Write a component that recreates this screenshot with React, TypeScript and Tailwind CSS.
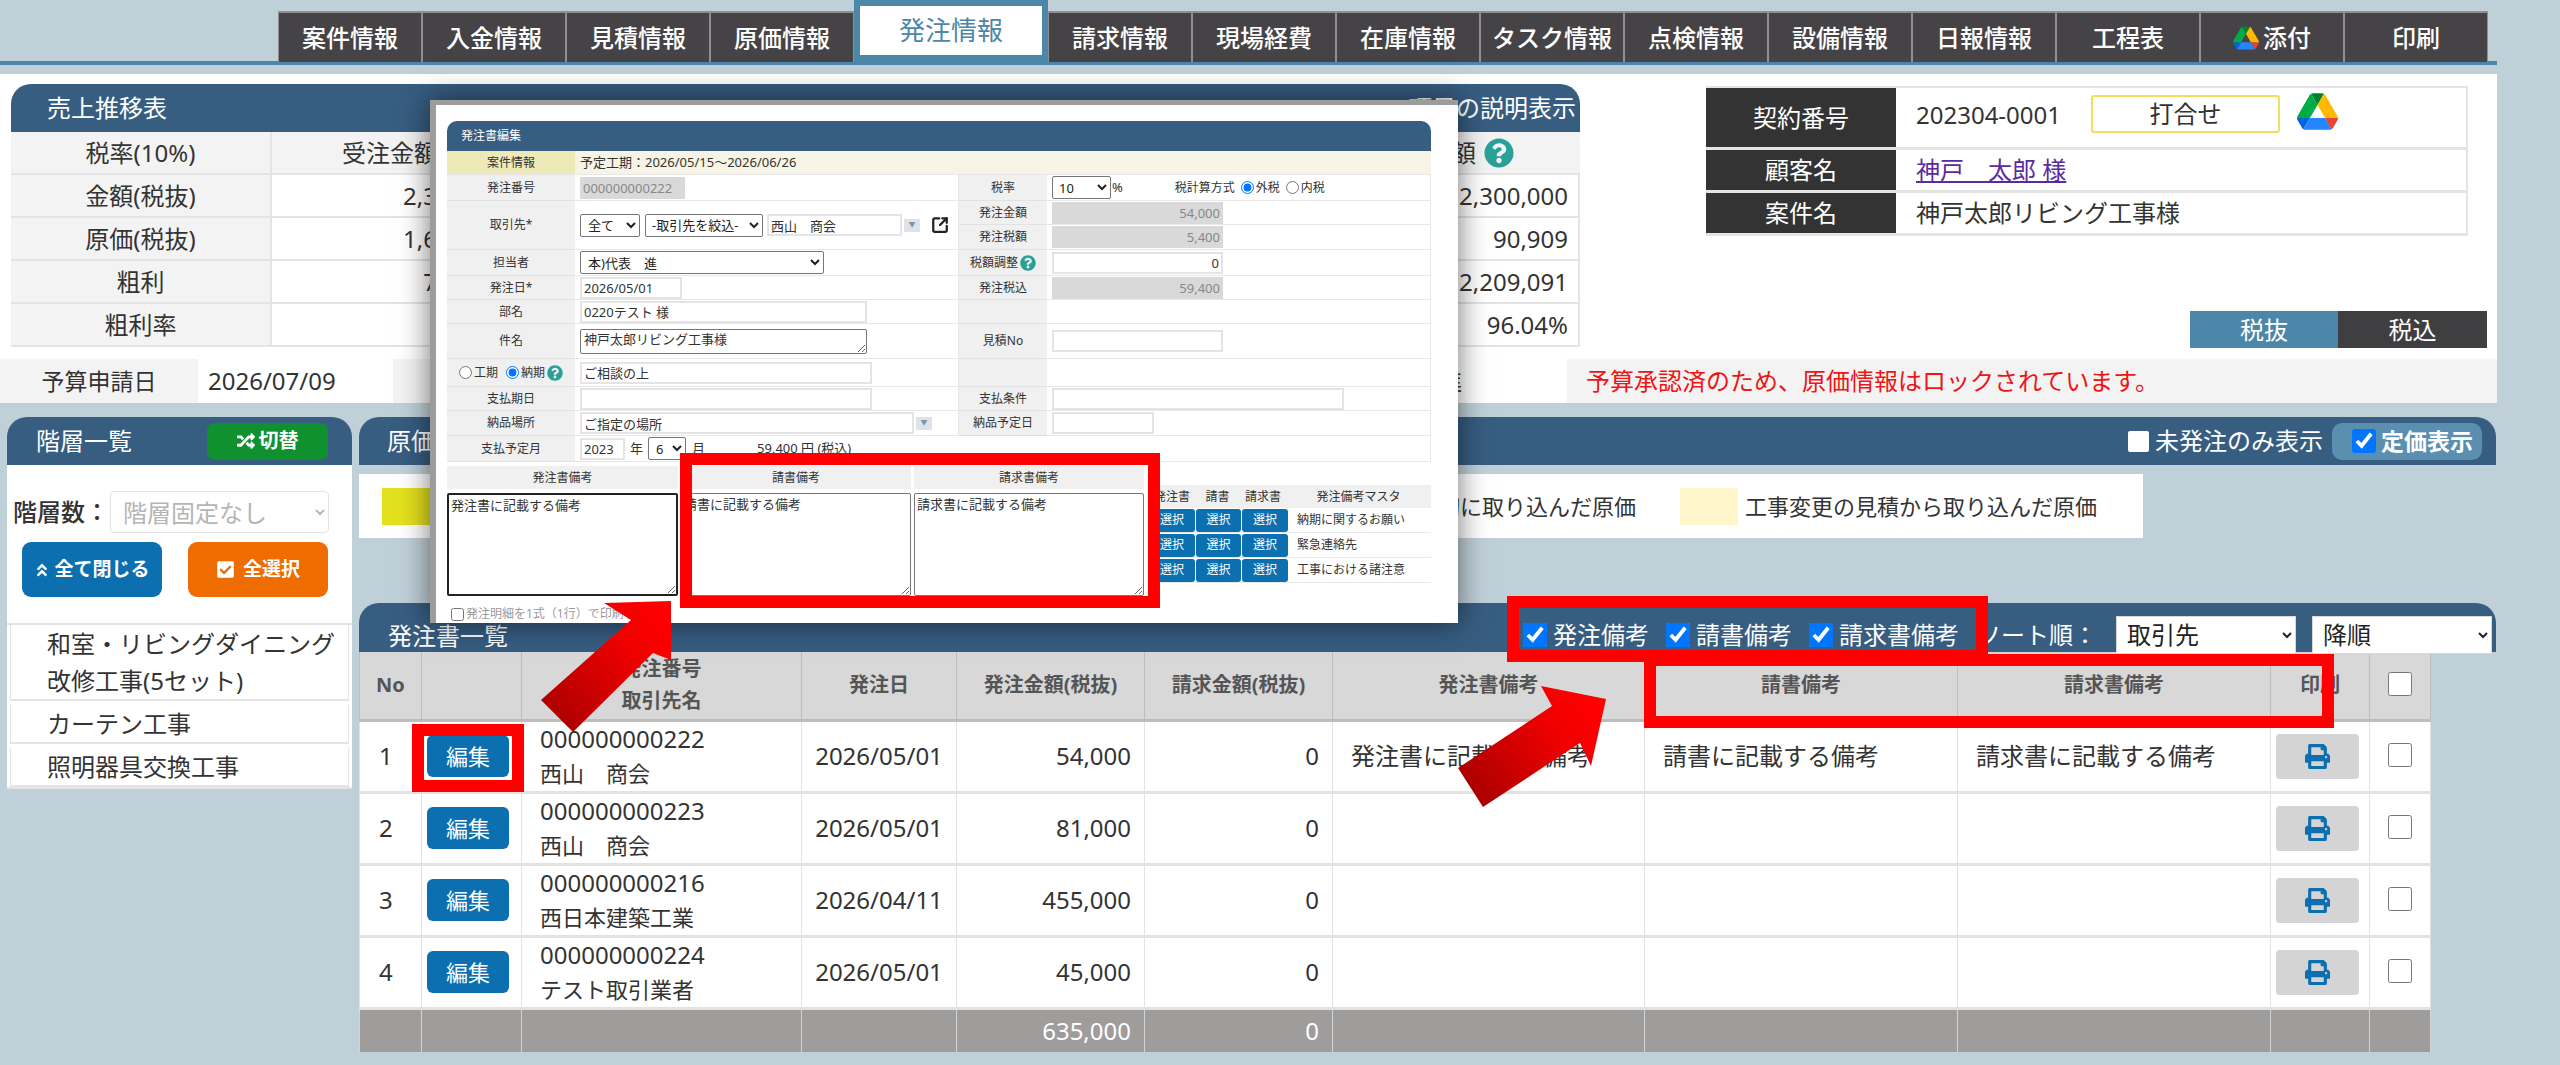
import { SquareArrowOutUpRight } from 'lucide-react'
import { FaAngleDoubleUp, FaCheckSquare, FaPrint, FaQuestionCircle, FaRandom } from 'react-icons/fa'

const tabs = ['案件情報', '入金情報', '見積情報', '原価情報', '発注情報', '請求情報', '現場経費', '在庫情報', 'タスク情報', '点検情報', '設備情報', '日報情報', '工程表', '添付', '印刷']

const salesRows = [
  { label: '金額(税抜)', first: '2,300,000', last: '2,300,000' },
  { label: '原価(税抜)', first: '1,650,000', last: '90,909' },
  { label: '粗利', first: '700,000', last: '2,209,091' },
  { label: '粗利率', first: '', last: '96.04%' },
]

const orders = [
  { no: 1, code: '000000000222', name: '西山　商会', date: '2026/05/01', amount: '54,000', note1: '発注書に記載する備考', note2: '請書に記載する備考', note3: '請求書に記載する備考' },
  { no: 2, code: '000000000223', name: '西山　商会', date: '2026/05/01', amount: '81,000', note1: '', note2: '', note3: '' },
  { no: 3, code: '000000000216', name: '西日本建築工業', date: '2026/04/11', amount: '455,000', note1: '', note2: '', note3: '' },
  { no: 4, code: '000000000224', name: 'テスト取引業者', date: '2026/05/01', amount: '45,000', note1: '', note2: '', note3: '' },
]

function DriveLogo({ className }: { className: string }) {
  return (
    <svg viewBox="0 0 87.3 78" className={className}>
      <path d="m6.6 66.85 3.85 6.65c.8 1.4 1.95 2.5 3.3 3.3l13.75-23.8h-27.5c0 1.55.4 3.1 1.2 4.5z" fill="#0066da" />
      <path d="m43.65 25-13.75-23.8c-1.35.8-2.5 1.9-3.3 3.3l-25.4 44a9.06 9.06 0 0 0 -1.2 4.5h27.5z" fill="#00ac47" />
      <path d="m73.55 76.8c1.35-.8 2.5-1.9 3.3-3.3l1.6-2.75 7.65-13.25c.8-1.4 1.2-2.95 1.2-4.5h-27.502l5.852 11.5z" fill="#ea4335" />
      <path d="m43.65 25 13.75-23.8c-1.35-.8-2.9-1.2-4.5-1.2h-18.5c-1.6 0-3.15.45-4.5 1.2z" fill="#00832d" />
      <path d="m59.8 53h-32.3l-13.75 23.8c1.35.8 2.9 1.2 4.5 1.2h50.8c1.6 0 3.15-.45 4.5-1.2z" fill="#2684fc" />
      <path d="m73.4 26.5-12.7-22c-.8-1.4-1.95-2.5-3.3-3.3l-13.75 23.8 16.15 28h27.45c0-1.55-.4-3.1-1.2-4.5z" fill="#ffba00" />
    </svg>
  )
}

function TabBar() {
  return (
    <div className="flex h-[65px] w-[2497px] border-b-[4px] border-[#4c86a8] pl-[278px] pt-[11px]">
      {tabs.map((tab) =>
        tab === '発注情報' ? (
          <div key={tab} className="-mt-[11px] flex h-[61px] w-[194px] shrink-0 items-center justify-center border-[6px] border-[#4c86a8] bg-white text-[26px] text-[#4c86a8]">
            {tab}
          </div>
        ) : (
          <div key={tab} className="flex h-[51px] w-[144px] shrink-0 items-center justify-center gap-1 border-x border-t-2 border-[#8f8f8f] bg-[#454345] text-[24px] font-medium text-white">
            {tab === '添付' ? <DriveLogo className="h-[24px] w-[26px]" /> : null}
            {tab}
          </div>
        ),
      )}
    </div>
  )
}

function SalesTable() {
  return (
    <div className="w-[1569px]">
      <div className="flex h-[48px] items-center justify-between rounded-t-[20px] bg-[#375d81] pl-[36px] pr-[4px] text-[24px] text-white">
        <span>売上推移表</span>
        <span>項目の説明表示</span>
      </div>
      <div className="grid h-[43px] grid-cols-[261px_248px_1fr_180px] border-b-2 border-[#e4e4e4] bg-[#f3f3f3] text-[24px] text-[#333]">
        <div className="flex items-center justify-center border-r-2 border-[#e4e4e4]">税率(10%)</div>
        <div className="flex items-center justify-center pr-[12px]">受注金額</div>
        <div />
        <div className="flex items-center gap-2 pl-[4px]">
          粗利額
          <FaQuestionCircle className="text-[30px] text-[#2aa198]" />
        </div>
      </div>
      {salesRows.map((row) => (
        <div key={row.label} className="grid h-[43px] grid-cols-[261px_248px_1fr_180px] border-b-2 border-[#e4e4e4] text-[24px] text-[#333]">
          <div className="flex items-center justify-center border-r-2 border-[#e4e4e4] bg-[#f3f3f3]">{row.label}</div>
          <div className="flex items-center justify-end pr-2">{row.first}</div>
          <div />
          <div className="flex items-center justify-end border-r-2 border-[#e4e4e4] pr-[10px]">{row.last}</div>
        </div>
      ))}
    </div>
  )
}

function ContractInfo() {
  const rowClass = 'flex border-b-[3px] border-[#e4e4e4] text-[24px] text-[#333]'
  const labelClass = 'flex w-[190px] shrink-0 items-center justify-center bg-[#333] text-white'
  return (
    <div className="ml-[126px] flex h-[264px] w-[781px] flex-col justify-between pt-[2px]">
      <div className="w-[762px] border-r-2 border-t-2 border-[#e4e4e4]">
        <div className={`${rowClass} h-[62px]`}>
          <div className={labelClass}>契約番号</div>
          <div className="flex items-start pl-[20px] pt-[7px]">
            <span className="w-[175px] pt-[2px] text-[24px]">202304-0001</span>
            <button className="flex h-[38px] w-[189px] items-center justify-center rounded-[3px] border-2 border-[#f5dc5c] bg-white text-[24px]">打合せ</button>
            <DriveLogo className="-mt-[2px] ml-[17px] h-[37px] w-[41px]" />
          </div>
        </div>
        <div className={`${rowClass} h-[43px]`}>
          <div className={labelClass}>顧客名</div>
          <a className="ml-[20px] self-center text-[#5b2a9d] underline">神戸　太郎 様</a>
        </div>
        <div className={`${rowClass} h-[43px]`}>
          <div className={labelClass}>案件名</div>
          <span className="ml-[20px] self-center">神戸太郎リビング工事様</span>
        </div>
      </div>
      <div className="ml-[484px] flex h-[37px] text-[24px] text-white">
        <div className="flex w-[148px] items-center justify-center bg-[#4c86a8]">税抜</div>
        <div className="flex w-[149px] items-center justify-center bg-[#3f3e40]">税込</div>
      </div>
    </div>
  )
}

function TopPanel() {
  return (
    <div className="mt-[9px] h-[328px] w-[2497px] bg-white pt-[10px]">
      <div className="flex pl-[11px]">
        <SalesTable />
        <ContractInfo />
      </div>
      <div className="mt-[11px] flex h-[44px] items-stretch bg-[#f3f3f3] text-[24px] text-[#333]">
        <div className="flex w-[198px] items-center justify-center text-[23px]">予算申請日</div>
        <div className="flex w-[195px] items-center bg-white pl-[10px]">2026/07/09</div>
        <div className="flex w-[906px] items-center justify-center">予算申請者</div>
        <div className="flex w-[268px] items-center bg-white pl-[36px]">本)代表　進</div>
        <div className="flex items-center pl-[19px] text-[#f01414]">予算承認済のため、原価情報はロックされています。</div>
      </div>
    </div>
  )
}

function Sidebar() {
  const items = ['和室・リビングダイニング改修工事(5セット)', 'カーテン工事', '照明器具交換工事']
  return (
    <aside className="ml-[7px] h-[372px] w-[345px] shrink-0">
      <div className="flex h-[48px] items-center justify-between rounded-t-[20px] bg-[#375d81] pl-[29px] pr-[24px] text-[24px] text-white">
        <span>階層一覧</span>
        <button className="flex h-[37px] w-[121px] items-center justify-center gap-1 rounded-[8px] bg-[#0f9130] text-[20px] font-bold text-white">
          <FaRandom className="text-[18px]" />
          切替
        </button>
      </div>
      <div className="h-[324px] bg-white pt-[26px]">
        <div className="flex items-center pl-[6px] text-[24px] text-[#333]">
          <span className="w-[97px] font-medium">階層数：</span>
          <select disabled defaultValue="none" className="h-[42px] w-[219px] rounded-[4px] border border-[#e2e2e2] bg-white pl-[8px] text-[#b5b5b5] opacity-100">
            <option value="none">階層固定なし</option>
          </select>
        </div>
        <div className="mt-[9px] flex gap-[26px] pl-[15px]">
          <button className="flex h-[55px] w-[140px] items-center justify-center gap-1 rounded-[9px] bg-[#0b6fb0] text-[19px] font-bold text-white">
            <FaAngleDoubleUp className="text-[16px]" />
            全て閉じる
          </button>
          <button className="flex h-[55px] w-[140px] items-center justify-center gap-2 rounded-[9px] bg-[#ef6c00] text-[19px] font-bold text-white">
            <FaCheckSquare className="text-[19px]" />
            全選択
          </button>
        </div>
        <div className="mt-[26px] border-y-2 border-[#e4e4e4] px-[3px]">
          {items.map((item) => (
            <div key={item} className="mb-[4px] border-x border-b-2 border-[#e4e4e4] pl-[36px] pr-[4px] text-[24px] leading-[37px] text-[#333] last:mb-0">
              {item}
            </div>
          ))}
        </div>
      </div>
    </aside>
  )
}

function OrderTable() {
  const head = 'border-x border-b-[3px] border-[#bdbdbd] bg-[#d8d8d8] text-[20px] font-bold text-[#555]'
  const cell = 'border-x border-b-[3px] border-[#e2e2e2] px-[18px] text-[24px] text-[#333]'
  const foot = 'border-x border-[#d4d4d4] bg-[#9f9c9c] px-[13px] text-right text-[24px] text-white'
  return (
    <table className="w-[2071px] table-fixed border-collapse bg-white">
      <colgroup>
        {[62, 100, 280, 155, 188, 188, 312, 313, 313, 99, 61].map((w, i) => (
          <col key={i} style={{ width: w }} />
        ))}
      </colgroup>
      <thead>
        <tr className="h-[68px]">
          <th className={head}>No</th>
          <th className={head} />
          <th className={`${head} leading-[32px]`}>発注番号<br />取引先名</th>
          <th className={head}>発注日</th>
          <th className={head}>発注金額(税抜)</th>
          <th className={head}>請求金額(税抜)</th>
          <th className={head}>発注書備考</th>
          <th className={head}>請書備考</th>
          <th className={head}>請求書備考</th>
          <th className={head}>印刷</th>
          <th className={head}><input type="checkbox" className="mt-[6px] h-[24px] w-[24px]" /></th>
        </tr>
      </thead>
      <tbody>
        {orders.map((order) => (
          <tr key={order.no} className="h-[72px]">
            <td className={`${cell} !px-[19px]`}>{order.no}</td>
            <td className={`${cell} !pl-0 !pr-[7px] text-center`}>
              <button className="h-[42px] w-[82px] rounded-[6px] bg-[#0b6fb0] text-[22px] text-white">編集</button>
            </td>
            <td className={cell}>
              <div className="leading-[34px]">{order.code}</div>
              <div className="text-[22px] leading-[34px]">{order.name}</div>
            </td>
            <td className={`${cell} !px-[9px] text-center`}>{order.date}</td>
            <td className={`${cell} !px-[13px] text-right`}>{order.amount}</td>
            <td className={`${cell} !px-[13px] text-right`}>0</td>
            <td className={`${cell} text-[22px]`}>{order.note1}</td>
            <td className={`${cell} text-[22px]`}>{order.note2}</td>
            <td className={`${cell} text-[22px]`}>{order.note3}</td>
            <td className={`${cell} !pl-0 !pr-[6px] text-center`}>
              <button className="inline-flex h-[45px] w-[83px] items-center justify-center rounded-[4px] bg-[#d4d4d4] text-[25px] text-[#0b6fb0]">
                <FaPrint />
              </button>
            </td>
            <td className={`${cell} !px-0 text-center`}>
              <input type="checkbox" className="mt-[6px] h-[24px] w-[24px]" />
            </td>
          </tr>
        ))}
        <tr className="h-[44px]">
          <td className={foot} />
          <td className={foot} />
          <td className={foot} />
          <td className={foot} />
          <td className={foot}>635,000</td>
          <td className={foot}>0</td>
          <td className={foot} />
          <td className={foot} />
          <td className={foot} />
          <td className={foot} />
          <td className={foot} />
        </tr>
      </tbody>
    </table>
  )
}

function MainColumn() {
  const checks = ['発注備考', '請書備考', '請求書備考']
  return (
    <main className="ml-[7px] w-[2137px] shrink-0">
      <div className="flex h-[48px] items-center rounded-t-[20px] bg-[#375d81] pl-[28px] pr-[14px] text-[24px] text-white">
        <span>原価一覧</span>
        <label className="ml-auto flex items-center gap-[6px]">
          <input type="checkbox" className="h-[21px] w-[21px] appearance-none rounded-[2px] bg-white" />
          未発注のみ表示
        </label>
        <label className="ml-[9px] flex h-[37px] w-[150px] items-center gap-[5px] rounded-[10px] bg-[#5a8fb0] pl-[20px] text-[23px] font-bold">
          <input type="checkbox" defaultChecked className="h-[24px] w-[24px] shrink-0" />
          定価表示
        </label>
      </div>
      <div className="mt-[9px] flex h-[64px] w-[1784px] items-center bg-white pl-[23px] text-[22px] text-[#333]">
        <div className="h-[37px] w-[58px] bg-[#e3e01e]" />
        <span className="ml-[12px] w-[1184px] text-right">見積から一括で最初に取り込んだ原価</span>
        <div className="ml-[44px] h-[37px] w-[58px] bg-[#fff6cc]" />
        <span className="ml-[7px]">工事変更の見積から取り込んだ原価</span>
      </div>
      <div className="mt-[65px] flex h-[49px] items-center rounded-t-[20px] bg-[#375d81] pl-[29px] text-[24px] text-white">
        <span className="pt-[16px]">発注書一覧</span>
        <div className="ml-[1015px] flex items-center pt-[14px]">
          {checks.map((check) => (
            <label key={check} className="mr-[17px] flex items-center gap-[6px] last:mr-0">
              <input type="checkbox" defaultChecked className="h-[24px] w-[24px]" />
              {check}
            </label>
          ))}
        </div>
        <span className="ml-[18px] pt-[14px]">ソート順：</span>
        <select defaultValue="a" className="ml-[19px] mt-[14px] h-[38px] w-[180px] border border-[#d8d8d8] bg-white pl-[6px] text-[24px] text-[#222]">
          <option value="a">取引先</option>
        </select>
        <select defaultValue="b" className="ml-[16px] mt-[14px] h-[38px] w-[180px] border border-[#d8d8d8] bg-white pl-[6px] text-[24px] text-[#222]">
          <option value="b">降順</option>
        </select>
      </div>
      <OrderTable />
    </main>
  )
}

const fieldClass = 'h-[22px] border-2 border-[#e4e4e4] bg-white px-[2px] text-[13px] text-[#333]'
const selectClass = 'h-[23px] rounded-[2px] border border-[#767676] bg-white text-[13px] text-[#222]'

function FormLabel({ children, className = '' }: { children?: React.ReactNode; className?: string }) {
  return <div className={`flex items-center justify-center border-b border-[#e2e2e2] bg-[#f0f0f0] text-[12px] text-[#333] ${className}`}>{children}</div>
}

function FormValue({ children, className = '' }: { children?: React.ReactNode; className?: string }) {
  return <div className={`flex items-center border-b border-r border-[#e8e8e8] pl-[5px] text-[13px] text-[#333] ${className}`}>{children}</div>
}

function DropButton() {
  return (
    <span className="ml-[2px] flex h-[13px] w-[16px] items-center justify-center bg-[#dde3e8] text-[7px] text-[#7d93a8]">▼</span>
  )
}

function Help({ className = '' }: { className?: string }) {
  return <FaQuestionCircle className={`text-[#2aa198] ${className}`} />
}

function OrderForm() {
  return (
    <div className="grid grid-cols-[128px_384px_88px_1fr] grid-rows-[26px_24px_25px_26px_24px_24px_35px_28px_24px_25px_26px]">
      <FormLabel>発注番号</FormLabel>
      <FormValue>
        <input readOnly defaultValue="000000000222" className="h-[22px] w-[105px] bg-[#d9d9d9] px-[3px] text-[13px] text-[#888]" />
      </FormValue>
      <FormLabel>税率</FormLabel>
      <FormValue>
        <select defaultValue="10" className={`${selectClass} w-[59px] pl-[2px]`}>
          <option value="10">10</option>
        </select>
        <span className="ml-[1px]">%</span>
        <span className="ml-[52px] text-[12px]">税計算方式</span>
        <input type="radio" name="tax" defaultChecked className="ml-[6px] h-[13px] w-[13px]" />
        <span className="ml-[2px] text-[12px]">外税</span>
        <input type="radio" name="tax" className="ml-[6px] h-[13px] w-[13px]" />
        <span className="ml-[2px] text-[12px]">内税</span>
      </FormValue>

      <FormLabel className="row-span-2">取引先*</FormLabel>
      <FormValue className="row-span-2">
        <select defaultValue="all" className={`${selectClass} w-[60px] pl-[3px]`}>
          <option value="all">全て</option>
        </select>
        <select defaultValue="f" className={`${selectClass} ml-[5px] w-[118px] pl-[2px]`}>
          <option value="f">-取引先を絞込-</option>
        </select>
        <input readOnly defaultValue="西山　商会" className={`${fieldClass} ml-[4px] w-[135px]`} />
        <DropButton />
        <SquareArrowOutUpRight size={18} strokeWidth={3} className="ml-[11px] text-[#222]" />
      </FormValue>
      <FormLabel>発注金額</FormLabel>
      <FormValue>
        <input readOnly defaultValue="54,000" className="h-[22px] w-[171px] bg-[#d9d9d9] px-[3px] text-right text-[13px] text-[#888]" />
      </FormValue>
      <FormLabel>発注税額</FormLabel>
      <FormValue>
        <input readOnly defaultValue="5,400" className="h-[22px] w-[171px] bg-[#d9d9d9] px-[3px] text-right text-[13px] text-[#888]" />
      </FormValue>

      <FormLabel>担当者</FormLabel>
      <FormValue>
        <select defaultValue="s" className={`${selectClass} w-[244px] pl-[3px]`}>
          <option value="s">本)代表　進</option>
        </select>
      </FormValue>
      <FormLabel className="gap-[2px]">税額調整<Help className="text-[16px]" /></FormLabel>
      <FormValue>
        <input readOnly defaultValue="0" className={`${fieldClass} w-[171px] text-right`} />
      </FormValue>

      <FormLabel>発注日*</FormLabel>
      <FormValue>
        <input readOnly defaultValue="2026/05/01" className={`${fieldClass} w-[102px]`} />
      </FormValue>
      <FormLabel>発注税込</FormLabel>
      <FormValue>
        <input readOnly defaultValue="59,400" className="h-[22px] w-[171px] bg-[#d9d9d9] px-[3px] text-right text-[13px] text-[#888]" />
      </FormValue>

      <FormLabel>部名</FormLabel>
      <FormValue>
        <input readOnly defaultValue="0220テスト 様" className={`${fieldClass} w-[287px]`} />
      </FormValue>
      <FormLabel />
      <FormValue />

      <FormLabel>件名</FormLabel>
      <FormValue>
        <textarea readOnly defaultValue="神戸太郎リビング工事様" className="h-[25px] w-[287px] rounded-[2px] border border-[#767676] px-[3px] text-[13px] leading-[18px] text-[#333]" />
      </FormValue>
      <FormLabel>見積No</FormLabel>
      <FormValue>
        <input readOnly className={`${fieldClass} w-[171px]`} />
      </FormValue>

      <FormLabel className="gap-[2px]">
        <input type="radio" name="term" className="h-[13px] w-[13px]" />
        <span className="mr-[6px]">工期</span>
        <input type="radio" name="term" defaultChecked className="h-[13px] w-[13px]" />
        <span>納期</span>
        <Help className="text-[16px]" />
      </FormLabel>
      <FormValue>
        <input readOnly defaultValue="ご相談の上" className={`${fieldClass} w-[292px]`} />
      </FormValue>
      <FormLabel />
      <FormValue />

      <FormLabel>支払期日</FormLabel>
      <FormValue>
        <input readOnly className={`${fieldClass} w-[292px]`} />
      </FormValue>
      <FormLabel>支払条件</FormLabel>
      <FormValue>
        <input readOnly className={`${fieldClass} w-[292px]`} />
      </FormValue>

      <FormLabel>納品場所</FormLabel>
      <FormValue>
        <input readOnly defaultValue="ご指定の場所" className={`${fieldClass} w-[334px]`} />
        <DropButton />
      </FormValue>
      <FormLabel>納品予定日</FormLabel>
      <FormValue>
        <input readOnly className={`${fieldClass} w-[102px]`} />
      </FormValue>

      <FormLabel>支払予定月</FormLabel>
      <FormValue className="col-span-3">
        <input readOnly defaultValue="2023" className={`${fieldClass} w-[45px]`} />
        <span className="ml-[5px]">年</span>
        <select defaultValue="6" className={`${selectClass} ml-[5px] w-[38px] pl-[3px]`}>
          <option value="6">6</option>
        </select>
        <span className="ml-[6px]">月</span>
        <span className="ml-[52px]">59,400 円 (税込)</span>
      </FormValue>
    </div>
  )
}

function OrderModal() {
  const remarks = [
    { title: '発注書備考', text: '発注書に記載する備考', width: 'w-[231px]', box: 'border-2 border-[#222]' },
    { title: '請書備考', text: '請書に記載する備考', width: 'w-[230px]', box: 'border border-[#767676]' },
    { title: '請求書備考', text: '請求書に記載する備考', width: 'w-[230px]', box: 'border border-[#767676]' },
  ]
  const masters = ['納期に関するお願い', '緊急連絡先', '工事における諸注意']
  return (
    <div className="absolute left-[430px] top-[100px] z-10 h-[523px] w-[1028px] overflow-hidden border-l-[6px] border-t-[5px] border-[#9c9c9c] bg-white pl-[11px] pt-[16px] shadow-[0_0_28px_rgba(0,0,0,0.55)]">
      <div className="w-[984px]">
        <div className="flex h-[30px] items-center rounded-t-[10px] bg-[#375d81] pl-[14px] text-[12px] text-white">発注書編集</div>
        <div className="flex h-[24px] border-b border-[#e8e8e8] text-[13px] text-[#333]">
          <div className="flex w-[128px] items-center justify-center bg-[#eeeab8] text-[12px]">案件情報</div>
          <div className="flex flex-1 items-center bg-[#f7f4e6] pl-[5px]">予定工期：2026/05/15～2026/06/26</div>
        </div>
        <OrderForm />
        <div className="mt-[4px] flex items-start gap-[3px]">
          {remarks.map((remark) => (
            <div key={remark.title} className={`${remark.width} shrink-0`}>
              <div className="flex h-[23px] items-center justify-center bg-[#f0f0f0] text-[12px] text-[#333]">{remark.title}</div>
              <textarea readOnly defaultValue={remark.text} className={`mt-[4px] block h-[103px] w-full rounded-[2px] bg-white px-[2px] text-[13px] leading-[20px] text-[#333] ${remark.box}`} />
            </div>
          ))}
          <div className="ml-[2px] mt-[19px] w-[282px] text-[12px] text-[#333]">
            <div className="grid h-[23px] grid-cols-[46px_45px_46px_1fr] items-center bg-[#f0f0f0] text-center">
              <span>発注書</span>
              <span>請書</span>
              <span>請求書</span>
              <span>発注備考マスタ</span>
            </div>
            {masters.map((master) => (
              <div key={master} className="grid h-[25px] grid-cols-[46px_45px_46px_1fr] items-center gap-x-[1px] border-b border-[#e8e8e8]">
                <button className="h-[23px] rounded-[3px] bg-[#0b6fb0] text-white">選択</button>
                <button className="h-[23px] rounded-[3px] bg-[#0b6fb0] text-white">選択</button>
                <button className="h-[23px] rounded-[3px] bg-[#0b6fb0] text-white">選択</button>
                <span className="pl-[8px]">{master}</span>
              </div>
            ))}
          </div>
        </div>
        <label className="ml-[4px] mt-[9px] flex items-center gap-[2px] text-[12px] text-[#999]">
          <input type="checkbox" className="h-[13px] w-[13px]" />
          発注明細を1式（1行）で印刷する
        </label>
      </div>
    </div>
  )
}

function Highlight({ className }: { className: string }) {
  return <div className={`absolute z-20 border-[12px] border-[#ff0000] ${className}`} />
}

function Callouts() {
  return (
    <>
      <Highlight className="left-[680px] top-[453px] h-[155px] w-[480px]" />
      <Highlight className="left-[1507px] top-[596px] h-[66px] w-[481px]" />
      <Highlight className="left-[1644px] top-[654px] h-[74px] w-[690px]" />
      <Highlight className="left-[412px] top-[724px] h-[68px] w-[112px]" />
      <svg className="pointer-events-none absolute left-0 top-0 z-30 h-[1065px] w-[2560px]" viewBox="0 0 2560 1065">
        <defs>
          <linearGradient id="arrowLeft" x1="545" y1="720" x2="660" y2="610" gradientUnits="userSpaceOnUse">
            <stop offset="0" stopColor="#a80000" />
            <stop offset="0.7" stopColor="#f00000" />
            <stop offset="1" stopColor="#ff0000" />
          </linearGradient>
          <linearGradient id="arrowRight" x1="1465" y1="790" x2="1590" y2="700" gradientUnits="userSpaceOnUse">
            <stop offset="0" stopColor="#a80000" />
            <stop offset="0.7" stopColor="#f00000" />
            <stop offset="1" stopColor="#ff0000" />
          </linearGradient>
        </defs>
        <polygon points="604,603 671,601 671,660 653,653 573,732 541,700 631,620" fill="url(#arrowLeft)" />
        <polygon points="1541,686 1606,699 1591,766 1580,743 1483,807 1458,768 1552,706" fill="url(#arrowRight)" />
      </svg>
    </>
  )
}

export default function App() {
  return (
    <div className="relative h-[1065px] w-[2560px] overflow-hidden bg-[#c0d0d8] font-['Noto_Sans','Noto_Sans_CJK_JP',sans-serif]">
      <TabBar />
      <TopPanel />
      <div className="mt-[15px] flex">
        <Sidebar />
        <MainColumn />
      </div>
      <OrderModal />
      <Callouts />
    </div>
  )
}
